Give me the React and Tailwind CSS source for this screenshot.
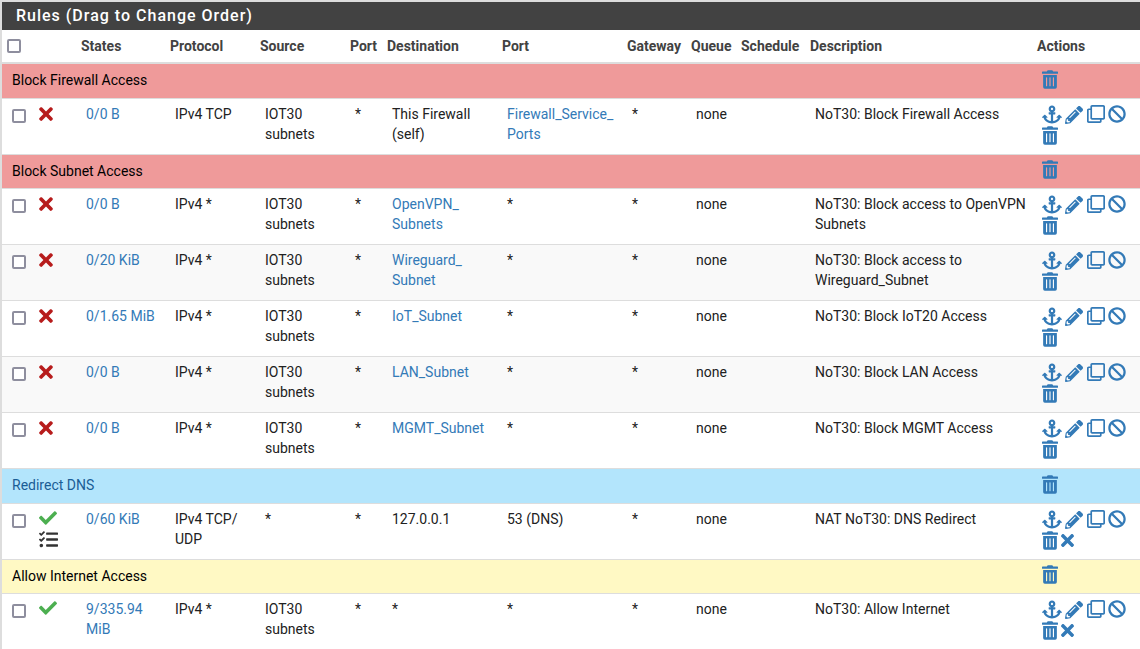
import React from 'react'
import { FaAnchor, FaPencilAlt, FaRegClone, FaBan, FaTrashAlt, FaTimes, FaCheck, FaTasks } from 'react-icons/fa'

const headers = ['', '', 'States', 'Protocol', 'Source', 'Port', 'Destination', 'Port', 'Gateway', 'Queue', 'Schedule', 'Description', 'Actions']
const widths = ['w-[31px]', 'w-[43px]', 'w-[89px]', 'w-[90px]', 'w-[90px]', 'w-[37px]', 'w-[115px]', 'w-[125px]', 'w-[64px]', 'w-[50px]', 'w-[69px]', 'w-[227px]', 'w-[108px]']

const rows = [
  { section: 'Block Firewall Access', bg: 'bg-[#ef9a9a]', h: 'h-[35px]' },
  { ok: false, states: '0/0 B', proto: 'IPv4 TCP', src: 'IOT30 subnets', dest: 'This Firewall (self)', port: 'Firewall_Service_ Ports', desc: 'NoT30: Block Firewall Access' },
  { section: 'Block Subnet Access', bg: 'bg-[#ef9a9a]', h: 'h-[34px]' },
  { ok: false, states: '0/0 B', proto: 'IPv4 *', src: 'IOT30 subnets', dest: 'OpenVPN_ Subnets', destLink: true, port: '*', desc: 'NoT30: Block access to OpenVPN Subnets' },
  { ok: false, states: '0/20 KiB', proto: 'IPv4 *', src: 'IOT30 subnets', dest: 'Wireguard_ Subnet', destLink: true, port: '*', desc: 'NoT30: Block access to Wireguard_Subnet', striped: true },
  { ok: false, states: '0/1.65 MiB', proto: 'IPv4 *', src: 'IOT30 subnets', dest: 'IoT_Subnet', destLink: true, port: '*', desc: 'NoT30: Block IoT20 Access' },
  { ok: false, states: '0/0 B', proto: 'IPv4 *', src: 'IOT30 subnets', dest: 'LAN_Subnet', destLink: true, port: '*', desc: 'NoT30: Block LAN Access', striped: true },
  { ok: false, states: '0/0 B', proto: 'IPv4 *', src: 'IOT30 subnets', dest: 'MGMT_Subnet', destLink: true, port: '*', desc: 'NoT30: Block MGMT Access' },
  { section: 'Redirect DNS', bg: 'bg-[#b3e5fc]', blue: true, h: 'h-[35px]' },
  { ok: true, tasks: true, states: '0/60 KiB', proto: 'IPv4 TCP/ UDP', src: '*', dest: '127.0.0.1', port: '53 (DNS)', plainPort: true, desc: 'NAT NoT30: DNS Redirect', del: true },
  { section: 'Allow Internet Access', bg: 'bg-[#fff9c4]', h: 'h-[34px]' },
  { ok: true, states: '9/335.94 MiB', proto: 'IPv4 *', src: 'IOT30 subnets', dest: '*', port: '*', desc: 'NoT30: Allow Internet', del: true },
]

function Box({ className }) {
  return <input type="checkbox" className={'appearance-none block w-[14px] h-[14px] border-2 border-[#8e8e9e] rounded-[2px] bg-white ' + className} />
}

function Actions({ del }) {
  return (
    <div className="text-[#337ab7]">
      <div className="flex items-start h-[21px]">
        <FaAnchor className="w-[20px] h-[19px]" />
        <FaPencilAlt className="w-[18px] h-[18px] ml-[3px] mt-[1px]" />
        <FaRegClone className="w-[18px] h-[18px] ml-[4px]" />
        <FaBan className="w-[18px] h-[18px] ml-[3px]" />
      </div>
      <div className="flex items-center h-[19px]">
        <FaTrashAlt className="w-[16px] h-[19px]" />
        {del && <FaTimes className="w-[13px] h-[19px] ml-[3px]" />}
      </div>
    </div>
  )
}

function Section({ row }) {
  return (
    <tr className={row.bg + ' border-b border-[#dddddd] ' + row.h}>
      <td colSpan={12} className={'pl-[10px] pb-[1px] align-middle ' + (row.blue ? 'text-[#1a5d96]' : 'text-black')}>{row.section}</td>
      <td className="pl-[10px] align-middle text-[#337ab7]"><FaTrashAlt className="w-[16px] h-[19px] mb-[3px]" /></td>
    </tr>
  )
}

function Rule({ row }) {
  const td = 'pl-[10px] pr-[5px] pt-[5px] pb-[10px] align-top'
  const link = 'text-[#337ab7]'
  return (
    <tr className={(row.striped ? 'bg-[#f9f9f9]' : 'bg-white') + ' border-b border-[#dddddd] h-[56px]'}>
      <td className={td}><Box className="mt-[5px]" /></td>
      <td className="pl-[6px] pt-[5px] align-top">
        {row.ok ? <FaCheck className="w-[18px] h-[18px] text-[#4caf50]" /> : <FaTimes className="w-[14px] h-[20px] text-[#b71c1c]" />}
        {row.tasks && <FaTasks className="w-[19px] h-[19px] text-[#333333] mt-[3px]" />}
      </td>
      <td className={td + ' ' + link}>{row.states}</td>
      <td className={td}>{row.proto}</td>
      <td className={td}>{row.src}</td>
      <td className={td}>*</td>
      <td className={td + ' ' + (row.destLink ? link : '')}>{row.dest}</td>
      <td className={td + ' ' + (row.port !== '*' && !row.plainPort ? link : '')}>{row.port}</td>
      <td className={td}>*</td>
      <td className={td}>none</td>
      <td className={td}></td>
      <td className={td}>{row.desc}</td>
      <td className="pl-[10px] pt-[6px] align-top"><Actions del={row.del} /></td>
    </tr>
  )
}

export default function App() {
  return (
    <div className="w-[1140px] h-[649px] overflow-hidden bg-white text-[14px] leading-[20px] text-[#212121] font-['Roboto',sans-serif]">
      <div className="border-t-2 border-l-2 border-[#dddddd]">
        <h2 className="bg-[#424242] text-white h-[28px] pl-[14px] text-[16px] leading-[28px] font-medium tracking-[1px]">Rules (Drag to Change Order)</h2>
        <table className="table-fixed w-[1138px] border-collapse">
          <colgroup>
            {widths.map((w, i) => <col key={i} className={w} />)}
          </colgroup>
          <thead>
            <tr className="h-[33px] border-b-2 border-[#dddddd]">
              {headers.map((h, i) => (
                <th key={i} className="pl-[5px] text-left font-bold text-[#424242] whitespace-nowrap align-middle">
                  {i === 0 ? <Box /> : h}
                </th>
              ))}
            </tr>
          </thead>
          <tbody>
            {rows.map((row, i) => row.section ? <Section key={i} row={row} /> : <Rule key={i} row={row} />)}
          </tbody>
        </table>
      </div>
    </div>
  )
}
